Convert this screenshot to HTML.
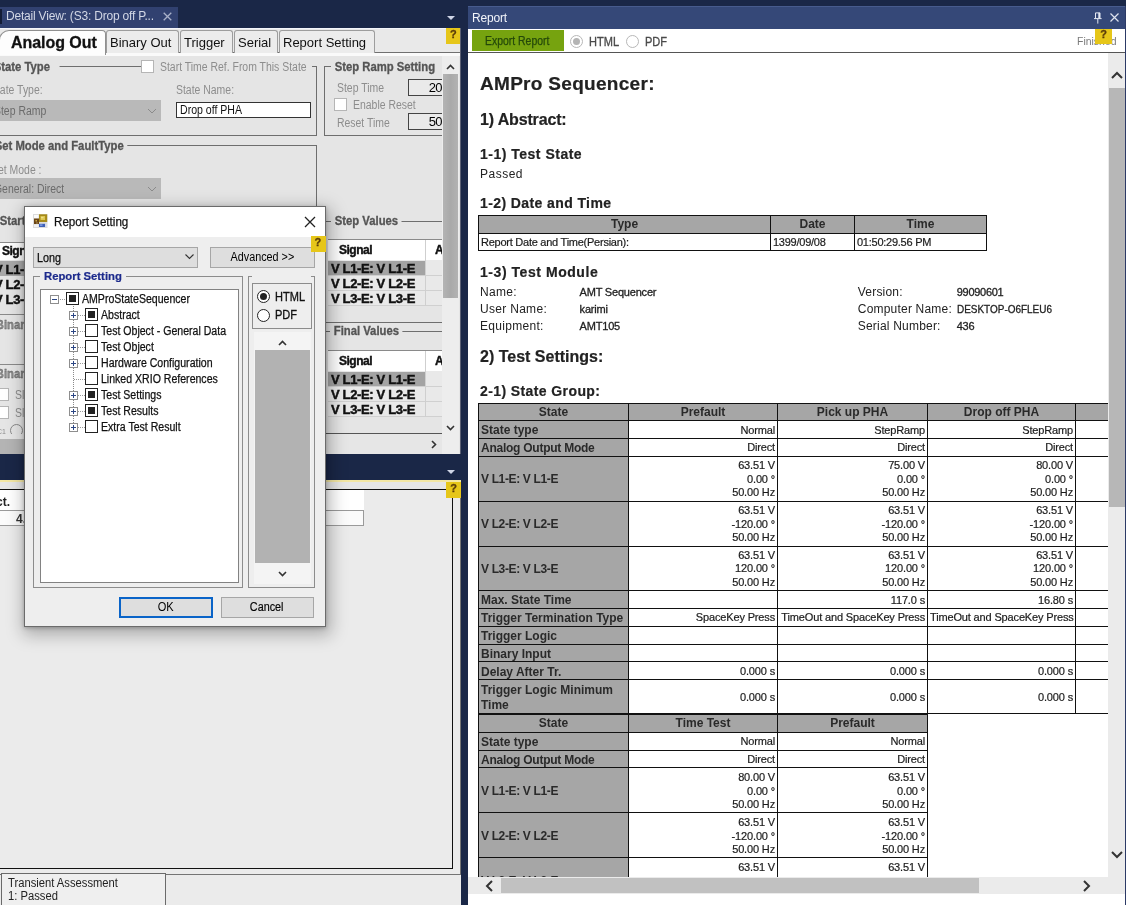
<!DOCTYPE html>
<html>
<head>
<meta charset="utf-8">
<title>AMPro Sequencer</title>
<style>
*{box-sizing:border-box;margin:0;padding:0}
html,body{width:1126px;height:905px;overflow:hidden;background:#1a2747;font-family:"Liberation Sans",sans-serif;font-size:11px;color:#000}
.a{position:absolute}
.t{position:absolute;white-space:nowrap;line-height:1}
#page{position:relative;width:1126px;height:905px;overflow:hidden;background:#1a2747;filter:blur(0.5px)}
/* ---------- LEFT TOP PANEL ---------- */
#lt{left:0;top:28px;width:461px;height:426px;background:#e5e5e5;overflow:hidden}
.tab{position:absolute;top:2px;height:23px;border:1px solid #9d9d9d;border-bottom:none;border-radius:3px 3px 0 0;background:#ececec;font-size:13px;line-height:24px;padding:0 3px;white-space:nowrap;color:#111}
.gb{position:absolute;border:1px solid #6e6e6e;}
.gl{position:absolute;font-weight:bold;font-size:12px;color:#555;background:#e5e5e5;white-space:nowrap;line-height:12px;padding:0 4px;transform:scaleX(.94);transform-origin:0 50%;-webkit-text-stroke:.3px #555}
.dl{position:absolute;color:#8d8d8d;font-size:12px;white-space:nowrap;line-height:12px;transform:scaleX(.87);transform-origin:0 50%}
.combo{position:absolute;background:#b9b9b9;color:#6b6b6b;font-size:12px;line-height:23px;white-space:nowrap}.combo span{display:inline-block;transform:scaleX(.87);transform-origin:0 50%}
.tb{position:absolute;border:1px solid #444;background:#eaeaea;text-align:right;font-size:13px;line-height:15px;letter-spacing:-.6px;overflow:hidden}
.cb{position:absolute;width:13px;height:13px;border:1px solid #b5b5b5;background:#fff}
.grid{position:absolute;background:#e9e9e9;border-top:1px solid #8a8a8a}
.gh{position:absolute;left:0;top:0;height:20px;background:#fff;width:100%}
.gr{position:absolute;left:0;height:15px;width:100%;border-bottom:1px solid #d0d0d0;font-weight:bold;font-size:13px;line-height:15px;white-space:nowrap;color:#111;letter-spacing:-0.35px;-webkit-text-stroke:.45px #111}
/* ---------- LEFT BOTTOM PANEL ---------- */
#lb{left:0;top:480px;width:461px;height:425px;background:#ebebeb;overflow:hidden}
/* ---------- DIALOG ---------- */
#dlg{left:24px;top:206px;width:302px;height:421px;background:#eeeeee;border:1px solid #6b6b6b;box-shadow:2px 5px 16px 3px rgba(0,0,0,.27),0 1px 4px rgba(0,0,0,.25)}
.btn{position:absolute;border:1px solid #a6a6a6;background:#dedede;font-size:12px;text-align:center;white-space:nowrap}
.tr{position:absolute;left:0;height:16px;font-size:12px;line-height:16px;white-space:nowrap}.tr span{transform:scaleX(.88);transform-origin:0 50%;-webkit-text-stroke:.25px #111}
.ck{position:absolute;width:13px;height:13px;border:1.4px solid #222;background:#fff}
.ck.on:after{content:"";position:absolute;left:1.7px;top:1.7px;width:7.2px;height:7.2px;background:#222}
.ex{position:absolute;width:9px;height:9px;border:1px solid #8e8e8e;background:#fff;z-index:2}
.ex:before{content:"";position:absolute;left:1px;top:2.7px;width:5px;height:1.6px;background:#2c4684}
.ex.p:after{content:"";position:absolute;left:2.7px;top:1px;width:1.6px;height:5px;background:#2c4684}
/* ---------- REPORT PANEL ---------- */
#rp{left:468px;top:6px;width:658px;height:899px;background:#fff;overflow:hidden}
#rc{position:absolute;left:0;top:47px;width:640px;height:824px;overflow:hidden;color:#222}
table.r{position:absolute;border-collapse:collapse;table-layout:fixed}
table.r td{border:1px solid #111;padding:2px 2px 0 2px;-webkit-text-stroke:.2px #1c1c1c;font-size:11px;line-height:13.7px;text-align:right;vertical-align:middle;white-space:nowrap;letter-spacing:-.15px;color:#1c1c1c;overflow:hidden}
table.r td.h{padding:1px 2px 1px 2px;background:#a6a6a6;font-weight:bold;font-size:12px;line-height:14.4px;text-align:center;letter-spacing:0;color:#2a2a2a;-webkit-text-stroke:0}
table.r td.l{background:#a6a6a6;font-weight:bold;font-size:12px;line-height:14.4px;text-align:left;letter-spacing:0;color:#2a2a2a;white-space:normal;-webkit-text-stroke:0}
table.r td.tl{text-align:left;letter-spacing:-.25px}
.h1{position:absolute;left:12px;font-weight:bold;white-space:nowrap;color:#222;line-height:1;-webkit-text-stroke:.2px #222}
.kv{position:absolute;white-space:nowrap;line-height:1;color:#222}
</style>
</head>
<body>
<div id="page">

<!-- ===== top tab strip: Detail View ===== -->
<div class="a" style="left:0;top:6.5px;width:178px;height:21.5px;background:#314170"></div><div class="a" style="left:0;top:9px;width:1.5px;height:15px;background:#141d36"></div>
<div class="t" style="left:6px;top:10px;font-size:12px;color:#d2d7e5;letter-spacing:-0.2px">Detail View: (S3: Drop off P...</div>
<svg class="a" style="left:163px;top:11.5px" width="9" height="9" viewBox="0 0 9 9"><path d="M0.7 0.7L8.3 8.3M8.3 0.7L0.7 8.3" stroke="#a9b1c9" stroke-width="1.3" fill="none"/></svg>
<svg class="a" style="left:447px;top:16px" width="8" height="5" viewBox="0 0 8 5"><path d="M0 0H8L4 4Z" fill="#cfd5e6"/></svg>


<div id="lt" class="a">
  <!-- tab strip -->
  <div class="a" style="left:0;top:0;width:460px;height:26px;background:#e9e9e9;border-top:1px solid #f3f5fa"></div>
  <div class="a" style="left:0;top:24px;width:460px;height:1px;background:#707070"></div><div class="a" style="left:0;top:25px;width:460px;height:3px;background:#fafafa"></div>
  <div class="tab" style="left:106px;width:73px">Binary Out</div>
  <div class="tab" style="left:180px;width:53px">Trigger</div>
  <div class="tab" style="left:234px;width:44px">Serial</div>
  <div class="tab" style="left:279px;width:96px">Report Setting</div>
  <div class="a" style="left:-1px;top:2px;width:107px;height:25px;background:#fdfdfd;border:1px solid #8f8f8f;border-bottom:none;border-radius:10px 4px 0 0"></div>
  <div class="t" style="left:11px;top:7px;font-size:16px;font-weight:bold;color:#111;letter-spacing:-0.05px;-webkit-text-stroke:.3px #111">Analog Out</div>
  <!-- yellow help -->
  <div class="a" style="left:446.4px;top:-1px;width:14.6px;height:16.8px;background:#e6c619"></div>
  <div class="t" style="left:450px;top:0.5px;font-size:11px;font-weight:bold;color:#5b3d0a;-webkit-text-stroke:.3px #5b3d0a">?</div>

  <!-- State Type group -->
  <div class="gb" style="left:-5px;top:38px;width:322px;height:70px"></div>
  <div class="gl" style="left:-10px;top:33px;width:74px">State Type</div>
  <div class="a" style="left:141px;top:32px;width:171px;height:13px;background:#e5e5e5"></div>
  <div class="cb" style="left:141px;top:32px"></div>
  <div class="dl" style="left:160px;top:33px">Start Time Ref. From This State</div>
  <div class="dl" style="left:-10px;top:56px">State Type:</div>
  <div class="dl" style="left:176px;top:56px">State Name:</div>
  <div class="combo" style="left:-6px;top:72px;width:167px;height:21px;padding-left:0"><span>Step Ramp</span></div>
  <svg class="a" style="left:147px;top:80px" width="10" height="6" viewBox="0 0 10 6"><path d="M1 1L5 5L9 1" stroke="#8a8a8a" stroke-width="1" fill="none"/></svg>
  <div class="a" style="left:176px;top:74px;width:135px;height:16px;background:#fff;border:1px solid #333"></div>
  <div class="t" style="left:180px;top:76px;font-size:12px;color:#111;transform:scaleX(.88);transform-origin:0 50%">Drop off PHA</div>

  <!-- Step Ramp Setting group -->
  <div class="gb" style="left:324px;top:38px;width:118px;height:70px;border-right:none"></div>
  <div class="gl" style="left:331px;top:33px;width:120px">Step Ramp Setting</div>
  <div class="dl" style="left:337px;top:54px">Step Time</div>
  <div class="tb" style="left:408px;top:51px;width:40px;height:17px;padding-right:5px">20</div>
  <div class="cb" style="left:334px;top:70px"></div>
  <div class="dl" style="left:353px;top:71px">Enable Reset</div>
  <div class="dl" style="left:337px;top:89px">Reset Time</div>
  <div class="tb" style="left:408px;top:85px;width:40px;height:17px;padding-right:5px">50</div>

  <!-- Set Mode group -->
  <div class="gb" style="left:-5px;top:117px;width:322px;height:120px"></div>
  <div class="gl" style="left:-9px;top:112px">Set Mode and FaultType</div>
  <div class="dl" style="left:-9px;top:136px">Set Mode :</div>
  <div class="combo" style="left:-6px;top:150px;width:167px;height:21px"><span>General: Direct</span></div>
  <svg class="a" style="left:147px;top:158px" width="10" height="6" viewBox="0 0 10 6"><path d="M1 1L5 5L9 1" stroke="#8a8a8a" stroke-width="1" fill="none"/></svg>

  <!-- Start values (left, mostly hidden) -->
  <div class="gl" style="left:-4px;top:187px;color:#555">Start</div>
  <div class="a" style="left:0;top:214px;width:30px;height:18px;background:#fff;border-top:1px solid #8a8a8a"></div>
  <div class="t" style="left:2px;top:217px;font-size:12px;font-weight:bold;color:#111;letter-spacing:-0.5px;-webkit-text-stroke:.4px #111">Sign</div>
  <div class="a" style="left:0;top:233px;width:30px;height:15px;background:#a8a8a8"></div>
  <div class="t" style="left:-6px;top:235px;font-size:13px;font-weight:bold;color:#111;letter-spacing:-0.35px;-webkit-text-stroke:.45px #111">V L1-</div>
  <div class="t" style="left:-6px;top:250px;font-size:13px;font-weight:bold;color:#111;letter-spacing:-0.35px;-webkit-text-stroke:.45px #111">V L2-</div>
  <div class="t" style="left:-6px;top:265px;font-size:13px;font-weight:bold;color:#111;letter-spacing:-0.35px;-webkit-text-stroke:.45px #111">V L3-</div>
  <div class="a" style="left:0;top:286px;width:30px;height:1px;background:#8a8a8a"></div>
  <div class="gl" style="left:-8px;top:291px;color:#8a8a8a">Binar</div>
  <div class="a" style="left:0;top:336px;width:30px;height:1px;background:#8a8a8a"></div>
  <div class="gl" style="left:-8px;top:340px;color:#8a8a8a">Binar</div>
  <div class="cb" style="left:-4px;top:360px"></div>
  <div class="dl" style="left:15px;top:361px">Sl</div>
  <div class="cb" style="left:-4px;top:378px"></div>
  <div class="dl" style="left:15px;top:379px">Sl</div>
  <div class="dl" style="left:-3px;top:398px;font-size:8px">C1</div>
  <div class="a" style="left:10px;top:396px;width:13px;height:13px;border:1px solid #888;border-radius:50%"></div>
  <div class="a" style="left:0;top:411px;width:30px;height:15px;background:#b4b4b4"></div>

  <!-- Step Values -->
  <div class="a" style="left:326px;top:193px;width:116px;height:1px;background:#6e6e6e"></div>
  <div class="gl" style="left:331px;top:187px">Step Values</div>
  <div class="grid" style="left:328px;top:211px;width:114px;height:66px">
    <div class="gh"></div>
    <div class="t" style="left:11px;top:4px;font-size:12px;font-weight:bold;color:#111;letter-spacing:-0.5px;-webkit-text-stroke:.4px #111">Signal</div>
    <div class="t" style="left:107px;top:4px;font-size:12px;font-weight:bold;color:#111;-webkit-text-stroke:.4px #111">A</div>
    <div class="gr" style="top:21px;"><div class="a" style="left:0;top:0;width:97px;height:14px;background:#a3a3a3"></div><span class="a" style="left:3px">V L1-E: V L1-E</span></div>
    <div class="gr" style="top:36px"><span class="a" style="left:3px">V L2-E: V L2-E</span></div>
    <div class="gr" style="top:51px"><span class="a" style="left:3px">V L3-E: V L3-E</span></div>
    <div class="a" style="left:97px;top:0;width:1px;height:66px;background:#cfcfcf"></div>
  </div>
  <div class="a" style="left:326px;top:294px;width:116px;height:1px;background:#6e6e6e"></div>

  <!-- Final Values -->
  <div class="a" style="left:326px;top:303px;width:116px;height:1px;background:#6e6e6e"></div>
  <div class="gl" style="left:330px;top:297px">Final Values</div>
  <div class="grid" style="left:328px;top:321.5px;width:114px;height:66px">
    <div class="gh"></div>
    <div class="t" style="left:11px;top:4px;font-size:12px;font-weight:bold;color:#111;letter-spacing:-0.5px;-webkit-text-stroke:.4px #111">Signal</div>
    <div class="t" style="left:107px;top:4px;font-size:12px;font-weight:bold;color:#111;-webkit-text-stroke:.4px #111">A</div>
    <div class="gr" style="top:21px;"><div class="a" style="left:0;top:0;width:97px;height:14px;background:#a3a3a3"></div><span class="a" style="left:3px">V L1-E: V L1-E</span></div>
    <div class="gr" style="top:36px"><span class="a" style="left:3px">V L2-E: V L2-E</span></div>
    <div class="gr" style="top:51px"><span class="a" style="left:3px">V L3-E: V L3-E</span></div>
    <div class="a" style="left:97px;top:0;width:1px;height:66px;background:#cfcfcf"></div>
  </div>
  <div class="a" style="left:326px;top:405px;width:116px;height:1px;background:#555"></div>

  <!-- vertical scrollbar -->
  <div class="a" style="left:442px;top:28px;width:17px;height:398px;background:#ededed"></div>
  <div class="a" style="left:443px;top:46px;width:15px;height:224px;background:linear-gradient(90deg,#b4b4b4,#a9a9a9 50%,#b2b2b2)"></div>
  <svg class="a" style="left:446px;top:36px" width="9" height="6" viewBox="0 0 9 6"><path d="M1 5L4.5 1.5L8 5" stroke="#333" stroke-width="1.6" fill="none"/></svg>
  <svg class="a" style="left:446px;top:397px" width="9" height="6" viewBox="0 0 9 6"><path d="M1 1L4.5 4.5L8 1" stroke="#333" stroke-width="1.6" fill="none"/></svg>
  <!-- horizontal scrollbar -->
  <div class="a" style="left:0;top:406px;width:442px;height:20px;background:#e6e6e6"></div>
  <div class="a" style="left:0;top:411px;width:30px;height:15px;background:#b4b4b4"></div>
  <svg class="a" style="left:431px;top:412px" width="6" height="9" viewBox="0 0 6 9"><path d="M1 1L4.5 4.5L1 8" stroke="#333" stroke-width="1.6" fill="none"/></svg>
  <div class="a" style="left:460px;top:0;width:1px;height:426px;background:#5b6074"></div>
</div>


<!-- small triangle in navy band -->
<svg class="a" style="left:447px;top:470px" width="8" height="5" viewBox="0 0 8 5"><path d="M0 0H8L4 4Z" fill="#cfd5e6"/></svg>
<div id="lb" class="a">
  <div class="a" style="left:0;top:0;width:461px;height:2px;background:#f3e7a4"></div>
  <div class="a" style="left:0;top:2px;width:461px;height:7px;background:#e6e6e6"></div>
  <!-- outer frame -->
  <div class="a" style="left:-2px;top:2px;width:462.5px;height:392.5px;border:1.5px solid #747474;border-top:none"></div>
  <!-- inner frame -->
  <div class="a" style="left:-2px;top:9px;width:455px;height:380px;border:1px solid #111;background:#ebebeb"></div>
  <!-- table-ish header -->
  <div class="a" style="left:0;top:10px;width:364px;height:20px;background:#fff"></div>
  <div class="t" style="left:-4px;top:16px;font-size:12px;font-weight:bold;color:#222">ct.</div>
  <div class="a" style="left:-2px;top:30px;width:366px;height:16px;border:1px solid #9a9a9a;background:#fbfbfb"></div>
  <div class="t" style="left:16px;top:33px;font-size:12px;font-weight:bold;color:#333">4.</div>
  <!-- yellow help -->
  <div class="a" style="left:446px;top:2px;width:15px;height:16px;background:#e6c619"></div>
  <div class="t" style="left:450.2px;top:2.6px;font-size:11px;font-weight:bold;color:#5b3d0a;-webkit-text-stroke:.3px #5b3d0a">?</div>
  <!-- status label -->
  <div class="a" style="left:1px;top:393px;width:165px;height:34px;border:1px solid #6a6a6a;background:#efefef"></div>
  <div class="t" style="left:8px;top:397px;font-size:12px;color:#222;transform:scaleX(.935);transform-origin:0 0">Transient Assessment</div>
  <div class="t" style="left:8px;top:410px;font-size:12px;color:#222;transform:scaleX(.935);transform-origin:0 0">1: Passed</div>
</div>


<div id="dlg" class="a">
  <!-- title bar -->
  <div class="a" style="left:0;top:0;width:300px;height:29.5px;background:#fff"></div>
  <svg class="a" style="left:8px;top:7px" width="15" height="14" viewBox="0 0 15 14">
    <rect x="0" y="0" width="14.5" height="14" fill="#dcdcdc"/>
    <rect x="1" y="1" width="4.5" height="3.5" fill="#fbfbfb"/>
    <rect x="1" y="4.5" width="5" height="5.5" fill="#6b4514"/><rect x="2.5" y="6" width="1.5" height="1.5" fill="#c9a94a"/><rect x="3" y="8" width="2" height="2" fill="#8a6a3a"/>
    <rect x="6" y="0.3" width="8.2" height="7.7" fill="#a68a18"/><rect x="7.5" y="2" width="4.6" height="4" fill="#dcc651"/><rect x="8" y="3.2" width="2.5" height="1" fill="#f3e89a"/>
    <rect x="6" y="9.8" width="6.2" height="3.2" fill="#3e5fb6"/><rect x="7" y="10.3" width="2.5" height="1.6" fill="#7d9be0"/>
    <rect x="1" y="10.5" width="4.5" height="2.5" fill="#f2f2f2"/><rect x="12.2" y="9.8" width="1.6" height="3.2" fill="#d6ddee"/>
  </svg>
  <div class="t" style="left:28.5px;top:9px;font-size:12.5px;color:#111;transform:scaleX(.93);transform-origin:0 50%;-webkit-text-stroke:.25px #111">Report Setting</div>
  <svg class="a" style="left:279px;top:9px" width="12" height="12" viewBox="0 0 12 12"><path d="M1 1L11 11M11 1L1 11" stroke="#222" stroke-width="1.3" fill="none"/></svg>
  <!-- combo + advanced -->
  <div class="a" style="left:8px;top:40px;width:165px;height:21px;border:1px solid #a6a6a6;background:#dedede"></div>
  <div class="t" style="left:12px;top:45px;font-size:12px;color:#111;transform:scaleX(.9);transform-origin:0 0;-webkit-text-stroke:.25px #111">Long</div>
  <svg class="a" style="left:160px;top:47px" width="9" height="6" viewBox="0 0 9 6"><path d="M0.5 0.5L4.5 4.5L8.5 0.5" stroke="#333" stroke-width="1.1" fill="none"/></svg>
  <div class="btn" style="left:185px;top:40px;width:105px;height:21px;line-height:19px"><span style="display:inline-block;transform:scaleX(.9)">Advanced &gt;&gt;</span></div>
  <div class="a" style="left:285.7px;top:29px;width:15px;height:16px;background:#e6c619"></div>
  <div class="t" style="left:289.5px;top:29.6px;font-size:11px;font-weight:bold;color:#5b3d0a;-webkit-text-stroke:.3px #5b3d0a">?</div>
  <!-- left group -->
  <div class="a" style="left:8px;top:69px;width:210px;height:312px;border:1px solid #8c8c8c"></div>
  <div class="t" style="left:15px;top:63px;padding:0 4px;background:#eeeeee;font-size:11.3px;-webkit-text-stroke:.2px #1c2a8c;font-weight:bold;color:#1c2a8c;line-height:13px">Report Setting</div>
  <div class="a" style="left:15px;top:82px;width:199px;height:294px;border:1px solid #828282;background:#fff"></div>
  <div id="tree" class="a" style="left:17px;top:84px;width:196px;height:291px;overflow:hidden">
<div class="a" style="left:31px;top:15px;width:0;height:121px;border-left:1px dotted #8a8a8a"></div>
<div class="tr" style="top:0px"><div class="a" style="left:13px;top:8px;width:12px;height:0;border-top:1px dotted #9a9a9a"></div><div class="ex " style="left:8px;top:4px"></div><div class="ck on" style="left:24px;top:1px"></div><span class="a" style="left:40px;top:-0.5px;color:#111">AMProStateSequencer</span></div>
<div class="tr" style="top:16px"><div class="a" style="left:32px;top:8px;width:11px;height:0;border-top:1px dotted #9a9a9a"></div><div class="ex p" style="left:27px;top:4px"></div><div class="ck on" style="left:43px;top:1px"></div><span class="a" style="left:59.3px;top:-0.5px;color:#111">Abstract</span></div>
<div class="tr" style="top:32px"><div class="a" style="left:32px;top:8px;width:11px;height:0;border-top:1px dotted #9a9a9a"></div><div class="ex p" style="left:27px;top:4px"></div><div class="ck " style="left:43px;top:1px"></div><span class="a" style="left:59.3px;top:-0.5px;color:#111">Test Object - General Data</span></div>
<div class="tr" style="top:48px"><div class="a" style="left:32px;top:8px;width:11px;height:0;border-top:1px dotted #9a9a9a"></div><div class="ex p" style="left:27px;top:4px"></div><div class="ck " style="left:43px;top:1px"></div><span class="a" style="left:59.3px;top:-0.5px;color:#111">Test Object</span></div>
<div class="tr" style="top:64px"><div class="a" style="left:32px;top:8px;width:11px;height:0;border-top:1px dotted #9a9a9a"></div><div class="ex p" style="left:27px;top:4px"></div><div class="ck " style="left:43px;top:1px"></div><span class="a" style="left:59.3px;top:-0.5px;color:#111">Hardware Configuration</span></div>
<div class="tr" style="top:80px"><div class="a" style="left:32px;top:8px;width:11px;height:0;border-top:1px dotted #9a9a9a"></div><div class="ck " style="left:43px;top:1px"></div><span class="a" style="left:59.3px;top:-0.5px;color:#111">Linked XRIO References</span></div>
<div class="tr" style="top:96px"><div class="a" style="left:32px;top:8px;width:11px;height:0;border-top:1px dotted #9a9a9a"></div><div class="ex p" style="left:27px;top:4px"></div><div class="ck on" style="left:43px;top:1px"></div><span class="a" style="left:59.3px;top:-0.5px;color:#111">Test Settings</span></div>
<div class="tr" style="top:112px"><div class="a" style="left:32px;top:8px;width:11px;height:0;border-top:1px dotted #9a9a9a"></div><div class="ex p" style="left:27px;top:4px"></div><div class="ck on" style="left:43px;top:1px"></div><span class="a" style="left:59.3px;top:-0.5px;color:#111">Test Results</span></div>
<div class="tr" style="top:128px"><div class="a" style="left:32px;top:8px;width:11px;height:0;border-top:1px dotted #9a9a9a"></div><div class="ex p" style="left:27px;top:4px"></div><div class="ck " style="left:43px;top:1px"></div><span class="a" style="left:59.3px;top:-0.5px;color:#111">Extra Test Result</span></div>

  </div>
  <!-- right group -->
  <div class="a" style="left:223px;top:69px;width:67px;height:312px;border:1px solid #8c8c8c;border-top:none"></div><div class="a" style="left:223px;top:69px;width:4px;height:1px;background:#8c8c8c"></div><div class="a" style="left:286px;top:69px;width:4px;height:1px;background:#8c8c8c"></div>
  <div class="a" style="left:227px;top:76px;width:60px;height:46px;border:1px solid #8c8c8c"></div>
  <div class="a" style="left:232px;top:82.5px;width:13px;height:13px;border:1px solid #222;border-radius:50%;background:#fff"></div>
  <div class="a" style="left:235px;top:85.5px;width:7px;height:7px;border-radius:50%;background:#222"></div>
  <div class="t" style="left:250px;top:83.5px;font-size:12px;color:#111;transform:scaleX(.92);transform-origin:0 0;-webkit-text-stroke:.3px #111">HTML</div>
  <div class="a" style="left:232px;top:101.5px;width:13px;height:13px;border:1px solid #222;border-radius:50%;background:#fff"></div>
  <div class="t" style="left:250px;top:102px;font-size:12px;color:#111;transform:scaleX(.92);transform-origin:0 0;-webkit-text-stroke:.3px #111">PDF</div>
  <!-- inner scroll -->
  <div class="a" style="left:229px;top:125px;width:57px;height:252px;background:#f4f4f4"></div>
  <div class="a" style="left:230px;top:143px;width:55px;height:213px;background:#b2b2b2"></div>
  <svg class="a" style="left:253px;top:133px" width="9" height="6" viewBox="0 0 9 6"><path d="M1 5L4.5 1.5L8 5" stroke="#333" stroke-width="1.6" fill="none"/></svg>
  <svg class="a" style="left:253px;top:364px" width="9" height="6" viewBox="0 0 9 6"><path d="M1 1L4.5 4.5L8 1" stroke="#333" stroke-width="1.6" fill="none"/></svg>
  <!-- buttons -->
  <div class="btn" style="left:94px;top:390px;width:94px;height:21px;line-height:17px;border:2px solid #0a64c8"><span style="display:inline-block;transform:scaleX(.92)">OK</span></div>
  <div class="btn" style="left:196px;top:390px;width:93px;height:21px;line-height:19px"><span style="display:inline-block;transform:scaleX(.9);position:relative;left:-1px;-webkit-text-stroke:.2px #111">Cancel</span></div>
</div>


<div id="rp" class="a">
  <div class="a" style="left:-1px;top:0.4px;width:659px;height:23px;background:#354878;border-top:1px solid #475b8d;border-left:1px solid #475b8d"></div>
  <div class="t" style="left:4px;top:6px;font-size:12px;color:#f2f4fa;letter-spacing:-0.2px">Report</div>
  <svg class="a" style="left:626px;top:6px" width="8" height="12" viewBox="0 0 8 12"><path d="M1.5 0.9H6V6.5M1.5 0.9V6.5M0 6.6H7.6M3.8 6.6V11.6" stroke="#e3e7f1" stroke-width="1" fill="none"/><rect x="4.3" y="0.9" width="1.7" height="5.6" fill="#e3e7f1"/></svg>
  <svg class="a" style="left:641.5px;top:7px" width="9" height="9" viewBox="0 0 9 9"><path d="M0.5 0.5L8.5 8.5M8.5 0.5L0.5 8.5" stroke="#dfe3ef" stroke-width="1.2" fill="none"/></svg>
  <!-- toolbar -->
  <div class="a" style="left:0;top:23px;width:658px;height:23px;background:#fff"></div>
  <div class="a" style="left:0;top:46px;width:658px;height:1px;background:#555"></div>
  <div class="a" style="left:4px;top:24px;width:92px;height:21px;background:#76a30f"></div>
  <div class="t" style="left:17px;top:29px;font-size:12px;color:#24480a;transform:scaleX(.87);transform-origin:0 0;-webkit-text-stroke:.25px #24480a">Export Report</div>
  <div class="a" style="left:102px;top:29px;width:13px;height:13px;border:1px solid #b8b8b8;border-radius:50%;background:#fff"></div>
  <div class="a" style="left:105px;top:32px;width:7px;height:7px;border-radius:50%;background:#b4b4b4"></div>
  <div class="t" style="left:121px;top:30px;font-size:12px;color:#4a4a4a;transform:scaleX(.92);transform-origin:0 0;-webkit-text-stroke:.3px #4a4a4a">HTML</div>
  <div class="a" style="left:158px;top:29px;width:13px;height:13px;border:1px solid #b8b8b8;border-radius:50%;background:#fff"></div>
  <div class="t" style="left:177px;top:30px;font-size:12px;color:#4a4a4a;transform:scaleX(.92);transform-origin:0 0;-webkit-text-stroke:.3px #4a4a4a">PDF</div>
  <div class="t" style="left:609px;top:30px;font-size:11px;color:#7a7a7a;transform:scaleX(.95);transform-origin:0 50%">Finished</div>
  <div class="a" style="left:627.4px;top:22.8px;width:16.6px;height:15.4px;background:#e6c619"></div>
  <div class="t" style="left:632.3px;top:23.4px;font-size:11px;font-weight:bold;color:#5b3d0a;-webkit-text-stroke:.3px #5b3d0a">?</div>
  <!-- content -->
  <div id="rc">
<div class="h1" style="left:12px;top:20.6px;font-size:19px;font-weight:bold;letter-spacing:0.3px">AMPro Sequencer:</div>
<div class="h1" style="left:12px;top:58.5px;font-size:16px;font-weight:bold;letter-spacing:-0.15px">1) Abstract:</div>
<div class="h1" style="left:12px;top:93.8px;font-size:14px;font-weight:bold;letter-spacing:0.5px">1-1) Test State</div>
<div class="h1" style="left:12px;top:114.5px;font-size:12px;font-weight:normal;letter-spacing:0.5px;-webkit-text-stroke:0">Passed</div>
<div class="h1" style="left:12px;top:143.4px;font-size:14px;font-weight:bold;letter-spacing:0.4px">1-2) Date and Time</div>
<table class="r" style="left:10px;top:161.8px;width:509px">
<colgroup><col style="width:292px"><col style="width:84px"><col style="width:132px"></colgroup>
<tr style="height:17.9px"><td class="h">Type</td><td class="h">Date</td><td class="h">Time</td></tr>
<tr style="height:17.3px"><td class="tl">Report Date and Time(Persian):</td><td class="tl">1399/09/08</td><td class="tl">01:50:29.56 PM</td></tr>
</table>
<div class="h1" style="left:12px;top:212.4px;font-size:14px;font-weight:bold;letter-spacing:0.55px">1-3) Test Module</div>
<div class="h1" style="left:12px;top:233.1px;font-size:12px;font-weight:normal;letter-spacing:0.3px;-webkit-text-stroke:0">Name:</div>
<div class="h1" style="left:111.60000000000002px;top:234.0px;font-size:11px;font-weight:normal;letter-spacing:-0.2px;-webkit-text-stroke:.3px #222">AMT Sequencer</div>
<div class="h1" style="left:389.79999999999995px;top:233.1px;font-size:12px;font-weight:normal;letter-spacing:0.2px;-webkit-text-stroke:0">Version:</div>
<div class="h1" style="left:488.79999999999995px;top:234.0px;font-size:11px;font-weight:normal;letter-spacing:-0.3px;-webkit-text-stroke:.3px #222">99090601</div>
<div class="h1" style="left:12px;top:250.1px;font-size:12px;font-weight:normal;letter-spacing:0.3px;-webkit-text-stroke:0">User Name:</div>
<div class="h1" style="left:111.60000000000002px;top:251.0px;font-size:11px;font-weight:normal;letter-spacing:-0.2px;-webkit-text-stroke:.3px #222">karimi</div>
<div class="h1" style="left:389.79999999999995px;top:250.1px;font-size:12px;font-weight:normal;letter-spacing:0.2px;-webkit-text-stroke:0">Computer Name:</div>
<div class="h1" style="left:488.79999999999995px;top:251.0px;font-size:11px;font-weight:normal;letter-spacing:0;transform:scaleX(.905);transform-origin:0 50%;-webkit-text-stroke:.3px #222">DESKTOP-O6FLEU6</div>
<div class="h1" style="left:12px;top:267.1px;font-size:12px;font-weight:normal;letter-spacing:0.3px;-webkit-text-stroke:0">Equipment:</div>
<div class="h1" style="left:111.60000000000002px;top:268.0px;font-size:11px;font-weight:normal;letter-spacing:-0.2px;-webkit-text-stroke:.3px #222">AMT105</div>
<div class="h1" style="left:389.79999999999995px;top:267.1px;font-size:12px;font-weight:normal;letter-spacing:0.2px;-webkit-text-stroke:0">Serial Number:</div>
<div class="h1" style="left:488.79999999999995px;top:268.0px;font-size:11px;font-weight:normal;letter-spacing:-0.3px;-webkit-text-stroke:.3px #222">436</div>
<div class="h1" style="left:12px;top:295.9px;font-size:16px;font-weight:bold;letter-spacing:0px">2) Test Settings:</div>
<div class="h1" style="left:12px;top:331.1px;font-size:14px;font-weight:bold;letter-spacing:0.4px">2-1) State Group:</div>
<table class="r" style="left:10px;top:349.5px;width:657px"><colgroup><col style="width:150px"><col style="width:149px"><col style="width:150px"><col style="width:148px"><col style="width:60px"></colgroup>
<tr style="height:17.45px"><td class="h">State</td><td class="h">Prefault</td><td class="h">Pick up PHA</td><td class="h">Drop off PHA</td><td class="h"></td></tr>
<tr style="height:17.9px"><td class="l">State type</td><td>Normal</td><td>StepRamp</td><td>StepRamp</td><td></td></tr>
<tr style="height:17.7px"><td class="l" style="letter-spacing:-.25px">Analog Output Mode</td><td>Direct</td><td>Direct</td><td>Direct</td><td></td></tr>
<tr style="height:45px"><td class="l" style="letter-spacing:-.35px">V L1-E: V L1-E</td><td>63.51 V<br>0.00 °<br>50.00 Hz</td><td>75.00 V<br>0.00 °<br>50.00 Hz</td><td>80.00 V<br>0.00 °<br>50.00 Hz</td><td><br><br></td></tr>
<tr style="height:45px"><td class="l" style="letter-spacing:-.35px">V L2-E: V L2-E</td><td>63.51 V<br>-120.00 °<br>50.00 Hz</td><td>63.51 V<br>-120.00 °<br>50.00 Hz</td><td>63.51 V<br>-120.00 °<br>50.00 Hz</td><td><br><br></td></tr>
<tr style="height:44.4px"><td class="l" style="letter-spacing:-.35px">V L3-E: V L3-E</td><td>63.51 V<br>120.00 °<br>50.00 Hz</td><td>63.51 V<br>120.00 °<br>50.00 Hz</td><td>63.51 V<br>120.00 °<br>50.00 Hz</td><td><br><br></td></tr>
<tr style="height:17.9px"><td class="l">Max. State Time</td><td></td><td>117.0 s</td><td>16.80 s</td><td></td></tr>
<tr style="height:17.9px"><td class="l">Trigger Termination Type</td><td>SpaceKey Press</td><td>TimeOut and SpaceKey Press</td><td>TimeOut and SpaceKey Press</td><td></td></tr>
<tr style="height:17.9px"><td class="l">Trigger Logic</td><td></td><td></td><td></td><td></td></tr>
<tr style="height:17.9px"><td class="l">Binary Input</td><td></td><td></td><td></td><td></td></tr>
<tr style="height:17.9px"><td class="l">Delay After Tr.</td><td>0.000 s</td><td>0.000 s</td><td>0.000 s</td><td></td></tr>
<tr style="height:33.75px"><td class="l">Trigger Logic Minimum Time</td><td>0.000 s</td><td>0.000 s</td><td>0.000 s</td><td></td></tr>
</table>
<table class="r" style="left:10px;top:661.1px;width:449px"><colgroup><col style="width:150px"><col style="width:149px"><col style="width:150px"></colgroup>
<tr style="height:17.4px"><td class="h">State</td><td class="h">Time Test</td><td class="h">Prefault</td></tr>
<tr style="height:18.1px"><td class="l">State type</td><td>Normal</td><td>Normal</td></tr>
<tr style="height:17.9px"><td class="l" style="letter-spacing:-.25px">Analog Output Mode</td><td>Direct</td><td>Direct</td></tr>
<tr style="height:44.9px"><td class="l" style="letter-spacing:-.35px">V L1-E: V L1-E</td><td>80.00 V<br>0.00 °<br>50.00 Hz</td><td>63.51 V<br>0.00 °<br>50.00 Hz</td></tr>
<tr style="height:45.1px"><td class="l" style="letter-spacing:-.35px">V L2-E: V L2-E</td><td>63.51 V<br>-120.00 °<br>50.00 Hz</td><td>63.51 V<br>-120.00 °<br>50.00 Hz</td></tr>
<tr style="height:45px"><td class="l" style="letter-spacing:-.35px">V L3-E: V L3-E</td><td>63.51 V<br>120.00 °<br>50.00 Hz</td><td>63.51 V<br>120.00 °<br>50.00 Hz</td></tr>
</table>

  </div>
  <!-- v scrollbar -->
  <div class="a" style="left:640px;top:47px;width:17px;height:841px;background:#ebebeb"></div><div class="a" style="left:657px;top:0;width:1px;height:899px;background:#2c3a66"></div>
  <div class="a" style="left:641px;top:82px;width:16px;height:419px;background:#b7b7b7"></div>
  <svg class="a" style="left:642.5px;top:65px" width="12" height="8" viewBox="0 0 12 8"><path d="M1 7L6 2L11 7" stroke="#333" stroke-width="2" fill="none"/></svg>
  <svg class="a" style="left:642.5px;top:845px" width="12" height="8" viewBox="0 0 12 8"><path d="M1 1L6 6L11 1" stroke="#333" stroke-width="2" fill="none"/></svg>
  <!-- h scrollbar -->
  <div class="a" style="left:0;top:871px;width:657px;height:17px;background:#ebebeb"></div>
  <div class="a" style="left:33px;top:872px;width:478px;height:15px;background:#c1c1c1"></div>
  <svg class="a" style="left:17px;top:874px" width="8" height="12" viewBox="0 0 8 12"><path d="M7 1L2 6L7 11" stroke="#333" stroke-width="2" fill="none"/></svg>
  <svg class="a" style="left:615px;top:874px" width="8" height="12" viewBox="0 0 8 12"><path d="M1 1L6 6L1 11" stroke="#333" stroke-width="2" fill="none"/></svg>
</div>


</div>
</body>
</html>
